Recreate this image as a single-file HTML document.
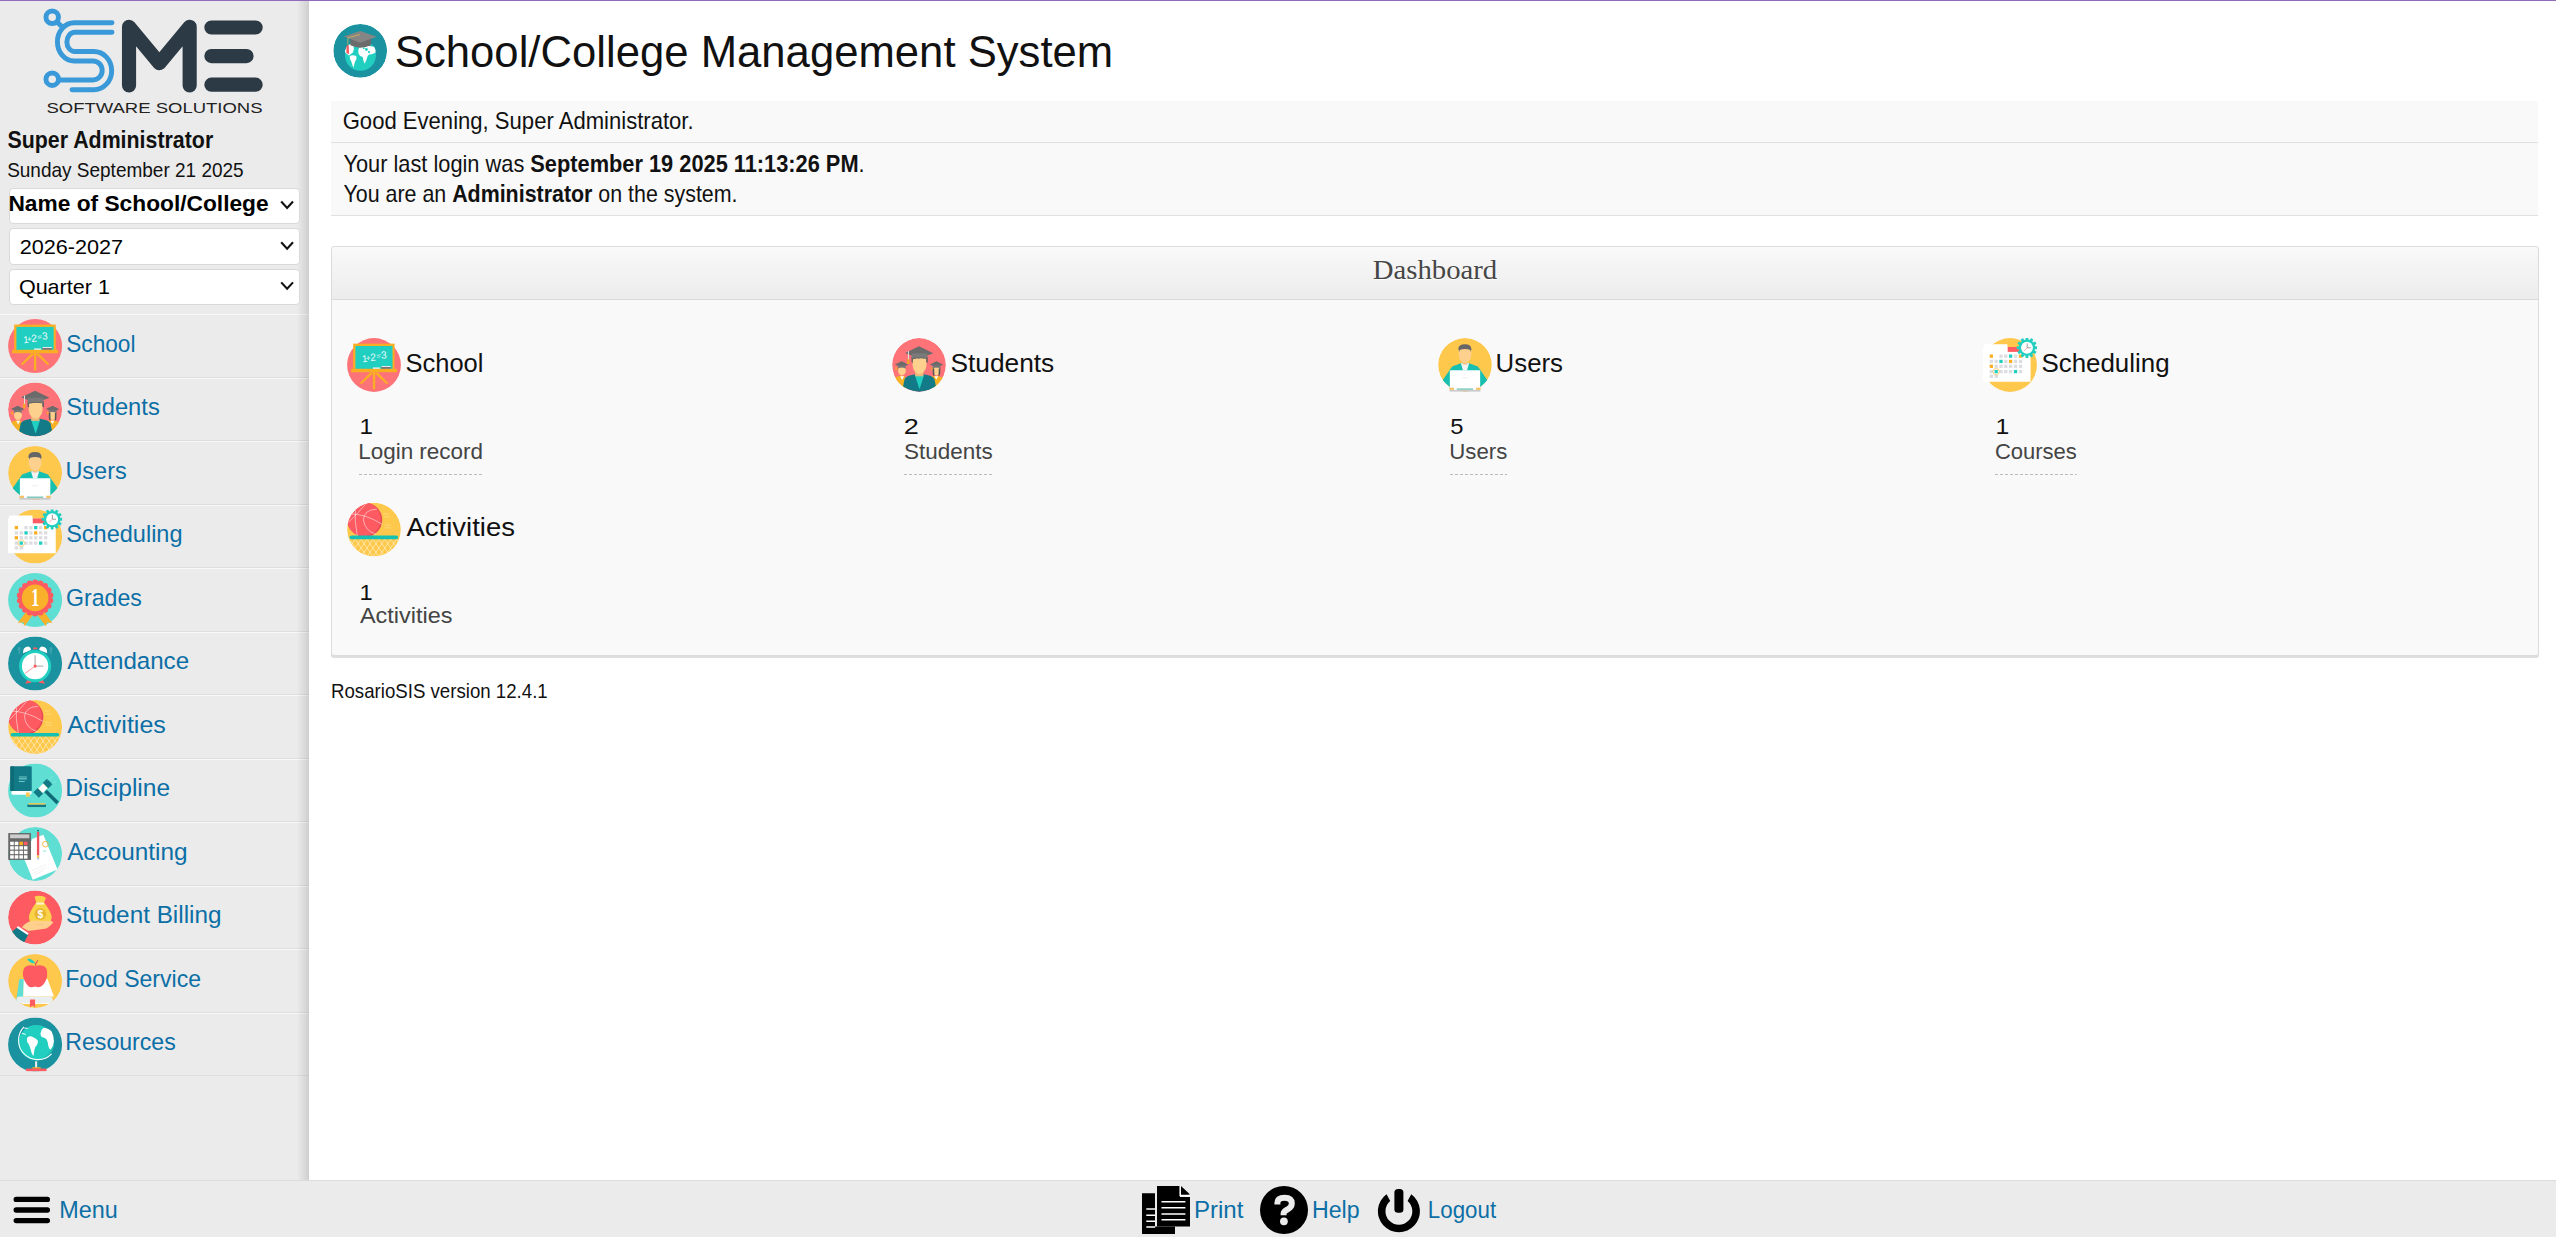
<!DOCTYPE html>
<html><head><meta charset="utf-8"><title>RosarioSIS</title>
<style>
html,body{margin:0;padding:0;}
body{width:2556px;height:1237px;overflow:hidden;position:relative;background:#fff;font-family:"Liberation Sans",sans-serif;}
div{position:absolute;box-sizing:border-box;}
#top{left:0;top:0;width:2556px;height:1px;background:#8f6cba;}
#side{left:0;top:1px;width:309px;height:1179px;background:#ebebeb;}
#sideshadow{left:297px;top:1px;width:12px;height:1179px;background:linear-gradient(to right,rgba(0,0,0,0),rgba(0,0,0,0.11) 92%,rgba(0,0,0,0.14));}
.sel{left:8.5px;width:291px;background:#fff;border:1px solid #d9d9d9;border-radius:4px;}
.mi{left:0;width:309px;height:63.5px;border-top:1px solid #f8f8f8;border-bottom:1px solid #dedede;}
#greet{left:331px;top:101px;width:2207px;height:115px;background:#f9f9f9;border-bottom:1px solid #e1e1e1;}
#greetsep{left:331px;top:142px;width:2207px;height:1px;background:#e1e1e1;}
#dash{left:331px;top:246px;width:2208px;height:410px;background:#f9f9f9;border:1px solid #dcdcdc;border-radius:3px;box-shadow:0 2px 0 #dedede;}
#dashhead{left:332px;top:247px;width:2206px;height:53px;background:linear-gradient(#f9f9f9,#ececec);border-bottom:1px solid #dadada;border-radius:3px 3px 0 0;}
#foot{left:0;top:1180px;width:2556px;height:57px;background:#ebebeb;border-top:1px solid #dcdcdc;}
svg#ov{position:absolute;left:0;top:0;width:2556px;height:1237px;}
</style></head><body>
<div id="top"></div>
<div id="side"></div>
<div class="mi" style="top:314.00px"></div><div class="mi" style="top:377.50px"></div><div class="mi" style="top:441.00px"></div><div class="mi" style="top:504.50px"></div><div class="mi" style="top:568.00px"></div><div class="mi" style="top:631.50px"></div><div class="mi" style="top:695.00px"></div><div class="mi" style="top:758.50px"></div><div class="mi" style="top:822.00px"></div><div class="mi" style="top:885.50px"></div><div class="mi" style="top:949.00px"></div><div class="mi" style="top:1012.50px"></div>
<div id="sideshadow"></div>
<div class="sel" style="top:187.5px;height:36px"></div>
<div class="sel" style="top:227.5px;height:37px"></div>
<div class="sel" style="top:268.5px;height:36px"></div>
<div id="greet"></div><div id="greetsep"></div>
<div id="dash"></div><div id="dashhead"></div>
<div id="foot"></div>
<svg id="ov" viewBox="0 0 2556 1237" width="2556" height="1237">
<defs>
<clipPath id="cl-st"><circle cx="600" cy="580" r="523"/></clipPath>
<clipPath id="cl-us"><circle cx="600" cy="580" r="523"/></clipPath>
<clipPath id="cl-ac"><circle cx="600" cy="580" r="523"/></clipPath>
<clipPath id="cl-acc"><circle cx="600" cy="580" r="523"/></clipPath>
<clipPath id="cl-bi"><circle cx="600" cy="580" r="523"/></clipPath>
<clipPath id="cl-fo"><circle cx="600" cy="580" r="523"/></clipPath>
<clipPath id="cl-ac2"><rect x="0" y="765" width="1200" height="400"/></clipPath>
<clipPath id="cl-ti"><circle cx="620" cy="637" r="520"/></clipPath>
<symbol id="ic-school" viewBox="75 55 1050 1050"><circle cx="600" cy="580" r="523" fill="#fe7378"/><rect x="195" y="165" width="805" height="490" fill="#f9ae23"/><rect x="238" y="210" width="722" height="445" fill="#21cfc1"/><g fill="#fff" fill-opacity="0.92" font-family="Liberation Sans" transform="rotate(-5 600 420)"><text x="365" y="505" font-size="190">1</text><text x="440" y="488" font-size="160">+</text><text x="525" y="495" font-size="200">2</text><text x="645" y="465" font-size="150">=</text><text x="735" y="470" font-size="200">3</text></g><rect x="580" y="628" width="135" height="27" fill="#f4f4f4"/><rect x="745" y="600" width="180" height="55" fill="#7d7377"/><rect x="745" y="600" width="180" height="18" fill="#f2f2f2"/><rect x="155" y="655" width="890" height="65" fill="#f9ae23"/><path d="M578 715 H624 V1050 H578 Z M535 715 L585 740 L360 950 L320 935 Z M665 715 L615 740 L840 950 L880 935 Z" fill="#f9ae23"/></symbol>
<symbol id="ic-students" viewBox="75 55 1050 1050"><g clip-path="url(#cl-st)"><circle cx="600" cy="580" r="523" fill="#fe7378"/><path d="M120 830 L230 790 L330 800 L360 1100 L120 1100 Z" fill="#f6b225"/><path d="M860 800 L950 790 L1080 830 L1080 1100 L860 1100 Z" fill="#f6b225"/><path d="M235 800 L270 870 L310 800 Z M900 800 L935 860 L975 800 Z" fill="#fff"/><ellipse cx="268" cy="690" rx="75" ry="95" fill="#fdd08d"/><ellipse cx="940" cy="690" rx="75" ry="95" fill="#fdd08d"/><path d="M865 640 Q860 760 880 790 L900 790 L895 650 Z M1015 640 Q1020 760 1000 790 L980 790 L985 650 Z" fill="#555"/><path d="M130 570 L265 505 L395 575 L265 630 Z" fill="#6b6b6b"/><path d="M190 590 H340 V650 Q265 610 190 650 Z" fill="#777"/><path d="M810 570 L940 505 L1070 575 L940 630 Z" fill="#6b6b6b"/><path d="M865 590 H1015 V650 Q940 610 865 650 Z" fill="#777"/><rect x="140" y="625" width="35" height="50" fill="#f6a623"/><rect x="830" y="625" width="30" height="45" fill="#f6a623"/><path d="M290 1000 L320 850 Q340 800 480 770 L540 760 H680 L740 770 Q880 800 900 850 L930 1000 Q600 1200 290 1000 Z" fill="#127b87"/><path d="M525 790 H695 L610 1050 Z" fill="#21cfc1"/><rect x="525" y="680" width="160" height="120" fill="#f0b97c"/><path d="M475 430 H745 V590 Q740 670 690 715 Q640 755 610 755 Q580 755 530 715 Q480 670 475 590 Z" fill="#fdd08d"/><path d="M455 420 H770 V540 L740 520 V460 Q600 430 480 470 V540 L455 520 Z" fill="#5d5d5d"/><path d="M330 345 L600 215 L880 350 L600 455 Z" fill="#6b6b6b"/><path d="M460 350 H760 V460 Q600 400 460 460 Z" fill="#7a7a7a"/><rect x="385" y="310" width="20" height="170" fill="#ddd"/><rect x="368" y="470" width="45" height="90" fill="#f6a623"/></g></symbol>
<symbol id="ic-users" viewBox="75 55 1050 1050"><g clip-path="url(#cl-us)"><circle cx="600" cy="580" r="523" fill="#fec84c"/><path d="M160 880 L350 610 L520 545 H680 L850 610 L1040 880 L900 1010 H300 Z" fill="#17bfb0"/><path d="M520 545 L560 680 H640 L680 545 Z" fill="#f3f3f3"/><rect x="560" y="500" width="80" height="70" fill="#f0b97c"/><path d="M478 270 H722 V400 Q722 470 660 520 Q620 550 600 550 Q580 550 540 520 Q478 470 478 400 Z" fill="#fdd08d"/><path d="M470 270 Q470 175 600 175 Q725 175 725 280 L705 330 V290 Q600 250 495 290 V330 Z" fill="#666"/></g><rect x="305" y="680" width="590" height="360" rx="15" fill="#fff"/><rect x="540" y="822" width="120" height="14" fill="#e3ecec"/><rect x="300" y="1062" width="600" height="35" fill="#c8cacc"/><rect x="295" y="1025" width="610" height="40" fill="#fff"/><rect x="440" y="1035" width="320" height="28" fill="#7fc6b8"/><rect x="295" y="1020" width="90" height="45" fill="#f3c26a"/><rect x="815" y="1020" width="90" height="45" fill="#f3c26a"/></symbol>
<symbol id="ic-sched" viewBox="75 55 1050 1050"><circle cx="600" cy="580" r="523" fill="#fec84c"/><path d="M75 905 V230 H95 V175 H550 V230 H1000 V905 Z" fill="#fff"/><rect x="555" y="230" width="235" height="95" fill="#fe5a61"/><rect x="205" y="376" width="64" height="64" fill="#f9ae23"/><rect x="393" y="376" width="64" height="64" fill="#dcdde0"/><rect x="486" y="376" width="64" height="64" fill="#dcdde0"/><rect x="580" y="376" width="64" height="64" fill="#21cfc1"/><rect x="676" y="376" width="64" height="64" fill="#dcdde0"/><rect x="773" y="376" width="64" height="64" fill="#f9ae23"/><rect x="205" y="478" width="64" height="64" fill="#dcdde0"/><rect x="300" y="478" width="64" height="64" fill="#dcdde0"/><rect x="393" y="478" width="64" height="64" fill="#21cfc1"/><rect x="486" y="478" width="64" height="64" fill="#dcdde0"/><rect x="580" y="478" width="64" height="64" fill="#f9ae23"/><rect x="676" y="478" width="64" height="64" fill="#dcdde0"/><rect x="773" y="478" width="64" height="64" fill="#dcdde0"/><rect x="205" y="573" width="64" height="64" fill="#f9ae23"/><rect x="300" y="573" width="64" height="64" fill="#dcdde0"/><rect x="393" y="573" width="64" height="64" fill="#dcdde0"/><rect x="486" y="573" width="64" height="64" fill="#dcdde0"/><rect x="580" y="573" width="64" height="64" fill="#dcdde0"/><rect x="676" y="573" width="64" height="64" fill="#dcdde0"/><rect x="773" y="573" width="64" height="64" fill="#dcdde0"/><rect x="205" y="676" width="64" height="64" fill="#dcdde0"/><rect x="300" y="676" width="64" height="64" fill="#21cfc1"/><rect x="393" y="676" width="64" height="64" fill="#dcdde0"/><rect x="486" y="676" width="64" height="64" fill="#dcdde0"/><rect x="580" y="676" width="64" height="64" fill="#dcdde0"/><rect x="676" y="676" width="64" height="64" fill="#21cfc1"/><rect x="773" y="676" width="64" height="64" fill="#dcdde0"/><rect x="205" y="768" width="64" height="64" fill="#dcdde0"/><rect x="300" y="768" width="64" height="64" fill="#dcdde0"/><circle cx="332" cy="708" r="62" fill="none" stroke="#f9ae23" stroke-width="10"/><circle cx="930" cy="245" r="160" fill="#21cfc1"/><rect x="902.5" y="45" width="55" height="60" rx="8" fill="#21cfc1" transform="rotate(0.0 930 245)"/><rect x="902.5" y="45" width="55" height="60" rx="8" fill="#21cfc1" transform="rotate(30.0 930 245)"/><rect x="902.5" y="45" width="55" height="60" rx="8" fill="#21cfc1" transform="rotate(60.0 930 245)"/><rect x="902.5" y="45" width="55" height="60" rx="8" fill="#21cfc1" transform="rotate(90.0 930 245)"/><rect x="902.5" y="45" width="55" height="60" rx="8" fill="#21cfc1" transform="rotate(120.0 930 245)"/><rect x="902.5" y="45" width="55" height="60" rx="8" fill="#21cfc1" transform="rotate(150.0 930 245)"/><rect x="902.5" y="45" width="55" height="60" rx="8" fill="#21cfc1" transform="rotate(180.0 930 245)"/><rect x="902.5" y="45" width="55" height="60" rx="8" fill="#21cfc1" transform="rotate(210.0 930 245)"/><rect x="902.5" y="45" width="55" height="60" rx="8" fill="#21cfc1" transform="rotate(240.0 930 245)"/><rect x="902.5" y="45" width="55" height="60" rx="8" fill="#21cfc1" transform="rotate(270.0 930 245)"/><rect x="902.5" y="45" width="55" height="60" rx="8" fill="#21cfc1" transform="rotate(300.0 930 245)"/><rect x="902.5" y="45" width="55" height="60" rx="8" fill="#21cfc1" transform="rotate(330.0 930 245)"/><circle cx="930" cy="245" r="115" fill="#fff"/><path d="M935 245 V160 M935 245 H1005" stroke="#777" stroke-width="14"/><path d="M935 245 L875 305" stroke="#fe5a61" stroke-width="10"/></symbol>
<symbol id="ic-grades" viewBox="75 55 1050 1050"><circle cx="600" cy="580" r="523" fill="#5fded4"/><path d="M440 790 L555 870 L395 1090 L375 1010 L265 1025 Z M760 790 L645 870 L810 1090 L830 1010 L935 1025 Z" fill="#f9b02a"/><circle cx="600" cy="540" r="300" fill="#fe5a61"/><circle cx="600.0" cy="240.0" r="58" fill="#fe5a61"/><circle cx="702.6" cy="258.1" r="58" fill="#fe5a61"/><circle cx="792.8" cy="310.2" r="58" fill="#fe5a61"/><circle cx="859.8" cy="390.0" r="58" fill="#fe5a61"/><circle cx="895.4" cy="487.9" r="58" fill="#fe5a61"/><circle cx="895.4" cy="592.1" r="58" fill="#fe5a61"/><circle cx="859.8" cy="690.0" r="58" fill="#fe5a61"/><circle cx="792.8" cy="769.8" r="58" fill="#fe5a61"/><circle cx="702.6" cy="821.9" r="58" fill="#fe5a61"/><circle cx="600.0" cy="840.0" r="58" fill="#fe5a61"/><circle cx="497.4" cy="821.9" r="58" fill="#fe5a61"/><circle cx="407.2" cy="769.8" r="58" fill="#fe5a61"/><circle cx="340.2" cy="690.0" r="58" fill="#fe5a61"/><circle cx="304.6" cy="592.1" r="58" fill="#fe5a61"/><circle cx="304.6" cy="487.9" r="58" fill="#fe5a61"/><circle cx="340.2" cy="390.0" r="58" fill="#fe5a61"/><circle cx="407.2" cy="310.2" r="58" fill="#fe5a61"/><circle cx="497.4" cy="258.1" r="58" fill="#fe5a61"/><circle cx="600" cy="540" r="258" fill="#f9b02a"/><text transform="translate(600 700) scale(0.78 1.12)" text-anchor="middle" font-family="Liberation Serif" font-weight="bold" font-size="420" fill="#fff">1</text></symbol>
<symbol id="ic-att" viewBox="75 55 1050 1050"><circle cx="600" cy="580" r="523" fill="#1a92a0"/><path d="M365 380 Q360 250 470 250 Q520 260 520 320 Z" fill="#fff"/><path d="M835 380 Q840 250 730 250 Q680 260 680 320 Z" fill="#fff"/><rect x="560" y="268" width="80" height="35" rx="12" fill="#fe5a61"/><path d="M410 972 L452 888 L548 918 L520 955 Z M790 972 L748 888 L652 918 L680 955 Z" fill="#fe5a61"/><path d="M290 260 Q250 300 290 340 Q320 370 280 400 M315 270 Q290 300 315 330 M910 260 Q950 300 910 340 Q880 370 920 400 M885 270 Q910 300 885 330" stroke="#7fc3cb" stroke-width="10" fill="none"/><circle cx="600" cy="630" r="312" fill="#21cfc1"/><circle cx="600" cy="630" r="255" fill="#fff"/><path d="M600 630 V420 M600 630 H760" stroke="#b9b9b9" stroke-width="26"/><path d="M600 630 L410 770" stroke="#fe5a61" stroke-width="12"/><circle cx="600" cy="630" r="30" fill="#fe5a61"/></symbol>
<symbol id="ic-act" viewBox="75 55 1050 1050"><g clip-path="url(#cl-ac)"><circle cx="600" cy="580" r="523" fill="#fec84c"/><circle cx="425" cy="390" r="335" fill="#e94a56"/><circle cx="400" cy="375" r="330" fill="#fe5a61"/><path d="M105 275 Q420 260 760 475 M240 115 Q215 420 275 700 M440 80 Q290 260 90 450 M655 180 Q400 190 395 390 Q420 600 640 670" stroke="#fff" stroke-width="11" fill="none" stroke-opacity="0.9"/><path d="M780 270 H880 M790 330 H910 M800 490 H920 M810 545 H930" stroke="#ffe08a" stroke-width="14"/><path d="M-340 765 L-113 1100 M-340 765 L-567 1100 M-225 765 L2 1100 M-225 765 L-452 1100 M-110 765 L117 1100 M-110 765 L-337 1100 M5 765 L232 1100 M5 765 L-222 1100 M120 765 L347 1100 M120 765 L-107 1100 M235 765 L462 1100 M235 765 L8 1100 M350 765 L577 1100 M350 765 L123 1100 M465 765 L692 1100 M465 765 L238 1100 M580 765 L807 1100 M580 765 L353 1100 M695 765 L922 1100 M695 765 L468 1100 M810 765 L1037 1100 M810 765 L583 1100 M925 765 L1152 1100 M925 765 L698 1100 M1040 765 L1267 1100 M1040 765 L813 1100 M1155 765 L1382 1100 M1155 765 L928 1100 M1270 765 L1497 1100 M1270 765 L1043 1100 M1385 765 L1612 1100 M1385 765 L1158 1100 " stroke="#fff5d5" stroke-width="12" clip-path="url(#cl-ac2)"/></g><rect x="125" y="695" width="945" height="70" rx="35" fill="#14c1b2"/></symbol>
<symbol id="ic-disc" viewBox="75 55 1050 1050"><circle cx="600" cy="580" r="523" fill="#5fded4"/><rect x="140" y="585" width="395" height="75" rx="37" fill="#fff"/><rect x="120" y="110" width="415" height="480" rx="25" fill="#117a86"/><rect x="120" y="110" width="70" height="480" rx="20" fill="#0e6c77"/><path d="M285 320 H440 M285 355 H440 M285 405 H400" stroke="#6fc9cc" stroke-width="20"/><path d="M425 620 H495 V715 L460 690 L425 715 Z" fill="#fec84c"/><g transform="rotate(45 752 537)"><rect x="825" y="502" width="330" height="70" fill="#0f6b77"/><rect x="677" y="350" width="150" height="120" fill="#117a86"/><rect x="677" y="604" width="150" height="120" fill="#117a86"/><rect x="692" y="468" width="120" height="138" fill="#fff"/><path d="M692 470 H812 M692 604 H812" stroke="#e0b84e" stroke-width="6"/></g><path d="M840 380 L950 300 M915 455 L1020 390" stroke="#9ceae2" stroke-width="12" stroke-dasharray="20 10"/><rect x="450" y="850" width="360" height="50" fill="#117a86"/><rect x="470" y="825" width="325" height="27" fill="#fec84c"/></symbol>
<symbol id="ic-acc" viewBox="75 55 1050 1050"><g clip-path="url(#cl-acc)"><circle cx="600" cy="580" r="523" fill="#5fded4"/><path d="M540 290 L760 205 L1035 880 L555 1080 L400 700 Z" fill="#fff"/></g><path d="M540 900 L800 790 M560 950 L820 840 M575 990 L760 905" stroke="#e6e6e6" stroke-width="10"/><circle cx="800" cy="390" r="55" fill="none" stroke="#f9ae23" stroke-width="16"/><rect x="755" y="510" width="60" height="25" fill="#a6e6e0"/><rect x="635" y="150" width="45" height="460" fill="#f0515e"/><rect x="635" y="610" width="45" height="45" fill="#fec84c"/><path d="M635 655 H680 L658 700 Z" fill="#9ad"/><rect x="640" y="115" width="35" height="25" fill="#0e6c77"/><rect x="80" y="175" width="440" height="520" fill="#666"/><rect x="115" y="200" width="375" height="75" fill="#cdcdcd"/><rect x="117" y="342" width="70" height="66" fill="#fff"/><rect x="205" y="342" width="70" height="66" fill="#fff"/><rect x="295" y="342" width="70" height="66" fill="#f9ae23"/><rect x="383" y="342" width="70" height="66" fill="#fe5a61"/><rect x="117" y="429" width="70" height="66" fill="#fff"/><rect x="205" y="429" width="70" height="66" fill="#fff"/><rect x="295" y="429" width="70" height="66" fill="#fff"/><rect x="383" y="429" width="70" height="66" fill="#fff"/><rect x="117" y="517" width="70" height="66" fill="#fff"/><rect x="205" y="517" width="70" height="66" fill="#fff"/><rect x="295" y="517" width="70" height="66" fill="#fff"/><rect x="383" y="517" width="70" height="66" fill="#fff"/><rect x="117" y="604" width="70" height="66" fill="#fff"/><rect x="205" y="604" width="70" height="66" fill="#fff"/><rect x="295" y="604" width="70" height="66" fill="#fff"/><rect x="383" y="604" width="70" height="66" fill="#fff"/></symbol>
<symbol id="ic-bill" viewBox="75 55 1050 1050"><g clip-path="url(#cl-bi)"><circle cx="600" cy="580" r="523" fill="#fe5a61"/><path d="M150 855 L260 770 L470 905 L390 1060 L200 1000 Z" fill="#117a86"/><path d="M255 760 L465 900" stroke="#fff" stroke-width="40"/></g><path d="M620 290 Q480 480 480 580 Q480 720 700 720 Q920 720 920 580 Q920 480 775 290 Z" fill="#f9d24a"/><path d="M590 180 Q640 150 700 165 Q760 150 810 200 L770 295 H625 Z" fill="#f9d24a"/><rect x="625" y="290" width="145" height="40" fill="#fff7cf"/><circle cx="700" cy="515" r="112" fill="#e9b52e"/><text x="700" y="590" text-anchor="middle" font-family="Liberation Sans" font-weight="bold" font-size="200" fill="#fff">$</text><path d="M345 770 Q420 680 520 650 Q620 630 720 650 L900 650 Q960 660 940 690 Q860 780 790 800 L470 840 Z" fill="#fdd08d"/><path d="M610 720 H760" stroke="#f4c27b" stroke-width="14"/></symbol>
<symbol id="ic-food" viewBox="75 55 1050 1050"><g clip-path="url(#cl-fo)"><circle cx="600" cy="580" r="523" fill="#fec84c"/><path d="M290 560 Q290 540 330 540 H385 L370 890 L230 1000 Z" fill="#5fded4"/><path d="M380 540 H840 L965 880 H370 Z" fill="#fff"/><rect x="240" y="880" width="700" height="130" rx="60" fill="#e9eef0"/><path d="M240 945 Q240 1010 330 1015 H975" stroke="#5fded4" stroke-width="0" fill="none"/><rect x="340" y="1005" width="640" height="18" fill="#fff"/><path d="M500 940 H600 V1095 L550 1055 L500 1095 Z" fill="#fe5a61"/></g><path d="M600 300 Q520 260 440 290 Q350 330 365 470 Q380 580 460 670 Q510 720 560 695 Q600 680 640 695 Q700 720 760 650 Q830 560 835 450 Q840 320 760 290 Q680 260 600 300 Z" fill="#fe5a61"/><path d="M600 300 Q610 220 655 180" stroke="#e0505a" stroke-width="22" fill="none"/><path d="M445 150 Q540 130 605 235 Q500 250 445 150 Z" fill="#21cfc1"/></symbol>
<symbol id="ic-res" viewBox="75 55 1050 1050"><circle cx="600" cy="580" r="523" fill="#1a92a0"/><circle cx="625" cy="545" r="343" fill="#21cfc1"/><path d="M700 880 A343 343 0 0 0 960 480 Q930 760 700 880 Z" fill="#1fbfb4"/><path d="M440 470 Q450 415 520 420 Q600 450 650 500 Q665 540 640 585 Q600 620 590 670 Q575 740 570 805 Q530 760 520 700 Q505 640 480 580 Q430 530 440 470 Z" fill="#fff"/><path d="M760 260 Q850 250 920 330 Q965 420 965 520 Q955 620 900 680 Q860 660 855 600 Q850 530 820 480 Q780 440 740 440 Q700 420 705 360 Q715 290 760 260 Z" fill="#fff"/><path d="M345 365 L420 385 M390 260 L460 270" stroke="#fff" stroke-width="18"/><path d="M385 240 A365 365 0 0 0 920 760" stroke="#fff" stroke-width="20" fill="none"/><rect x="600" y="905" width="40" height="130" fill="#eee"/><rect x="545" y="1022" width="165" height="30" rx="10" fill="#f9ae23"/><rect x="420" y="1045" width="405" height="55" rx="27" fill="#fe5a61"/></symbol>
<symbol id="ic-title" viewBox="100 115 1040 1045"><g clip-path="url(#cl-ti)"><circle cx="620" cy="637" r="520" fill="#1a92a0"/><circle cx="625" cy="720" r="300" fill="#21cfc1"/><path d="M325 660 Q335 560 420 510 L490 515 Q510 600 480 670 Q440 700 405 725 Q355 705 325 660 Z" fill="#fff"/><path d="M585 610 Q610 540 720 535 L890 555 Q930 620 915 670 Q870 700 825 705 Q785 700 765 735 Q745 810 705 885 Q675 820 668 755 Q600 735 585 690 Z" fill="#fff"/><path d="M418 738 Q470 705 545 738 Q562 790 522 842 Q502 900 492 962 Q460 900 448 842 Q408 790 418 738 Z" fill="#fff"/><circle cx="740" cy="610" r="28" fill="#21cfc1"/><circle cx="790" cy="660" r="22" fill="#21cfc1"/><circle cx="690" cy="585" r="18" fill="#21cfc1"/></g><path d="M430 390 H830 V530 Q620 620 430 530 Z" fill="#6b6b6b"/><path d="M300 360 L620 250 L940 365 L620 480 Z" fill="#858585"/><path d="M612 322 L380 385 V520" stroke="#e0b84e" stroke-width="14" fill="none"/><path d="M355 540 L398 528 L405 700 L352 680 Z" fill="#fe5a61"/></symbol>
</defs>
<g transform="translate(40 5) scale(0.072727)">
<g fill="none" stroke="#3a9ad9" stroke-width="68" stroke-linecap="round">
<circle cx="168" cy="168" r="86"/>
<circle cx="168" cy="1020" r="86"/>
<path d="M235 235 L300 295"/>
<path d="M990 245 H470 A230 262 0 0 0 470 770 H730 A125 130 0 0 1 730 1030 H265"/>
<path d="M990 375 H480 A110 132 0 0 0 480 640 H740 A245 262 0 0 1 740 1165 H440"/>
</g></g>
<g transform="translate(30 0) scale(0.10105)" fill="none" stroke="#2b3a44" stroke-width="140" stroke-linecap="round" stroke-linejoin="round">
<path d="M980 845 V265 L1280 625 L1580 265 V845"/>
<path d="M1795 272 H2233 M1795 555 H2143 M1795 838 H2233"/>
</g>
<text x="46.5" y="113.2" font-family="Liberation Sans" font-size="14.6" fill="#222" textLength="216" lengthAdjust="spacingAndGlyphs">SOFTWARE SOLUTIONS</text>

<path d="M281.2 201.5 L287.1 207.9 L293 201.5" fill="none" stroke="#111" stroke-width="2.1"/><path d="M281.2 242.29999999999998 L287.1 248.7 L293 242.29999999999998" fill="none" stroke="#111" stroke-width="2.1"/><path d="M281.2 282.4 L287.1 288.8 L293 282.4" fill="none" stroke="#111" stroke-width="2.1"/>
<use href="#ic-title" x="333.2" y="23.9" width="54" height="54"/><use href="#ic-school" x="8" y="318.90" width="54.2" height="54.2"/><use href="#ic-students" x="8" y="382.40" width="54.2" height="54.2"/><use href="#ic-users" x="8" y="445.90" width="54.2" height="54.2"/><use href="#ic-sched" x="8" y="509.40" width="54.2" height="54.2"/><use href="#ic-grades" x="8" y="572.90" width="54.2" height="54.2"/><use href="#ic-att" x="8" y="636.40" width="54.2" height="54.2"/><use href="#ic-act" x="8" y="699.90" width="54.2" height="54.2"/><use href="#ic-disc" x="8" y="763.40" width="54.2" height="54.2"/><use href="#ic-acc" x="8" y="826.90" width="54.2" height="54.2"/><use href="#ic-bill" x="8" y="890.40" width="54.2" height="54.2"/><use href="#ic-food" x="8" y="953.90" width="54.2" height="54.2"/><use href="#ic-res" x="8" y="1017.40" width="54.2" height="54.2"/><use href="#ic-school" x="347" y="338" width="54" height="54"/><use href="#ic-students" x="892" y="338" width="54" height="54"/><use href="#ic-users" x="1438" y="338" width="54" height="54"/><use href="#ic-sched" x="1983" y="338" width="54" height="54"/><use href="#ic-act" x="347" y="502.7" width="54" height="54"/>
<path d="M359.0 474.5 H482.3" stroke="#bbb" stroke-width="1" stroke-dasharray="3 2"/><path d="M904.0 474.5 H992.5" stroke="#bbb" stroke-width="1" stroke-dasharray="3 2"/><path d="M1450.0 474.5 H1507.1" stroke="#bbb" stroke-width="1" stroke-dasharray="3 2"/><path d="M1995.0 474.5 H2076.7" stroke="#bbb" stroke-width="1" stroke-dasharray="3 2"/>

<g fill="#000">
<path d="M1142 1193.3 H1155 V1226.5 H1175 V1234 H1142 Z"/>
<path d="M1157 1186 H1180 V1197 H1190 V1226.4 H1157 Z"/>
<path d="M1181 1186 L1190 1194.5 H1181 Z"/>
</g>
<g stroke="#fff" stroke-width="1.5">
<path d="M1161.5 1201.7 H1185.4 M1161.5 1207.8 H1185.4 M1161.5 1213.9 H1185.4 M1161.5 1219.8 H1185.4"/>
<path d="M1146.3 1209.1 H1155.2 M1146.3 1215.2 H1155.2 M1146.3 1221.3 H1155.2 M1146.3 1227.1 H1155.2"/>
<path d="M1180.2 1186 V1195.6 H1190"/>
</g>
<circle cx="1284" cy="1210" r="24" fill="#000"/>
<path d="M1277.4 1204.5 V1202.8 Q1277.6 1197.8 1284.5 1197.8 Q1291.8 1197.8 1291.8 1203.5 Q1291.8 1207 1288 1209.2 Q1283.6 1211.5 1283.6 1213.5 V1215.2" fill="none" stroke="#ebebeb" stroke-width="6"/>
<circle cx="1283.9" cy="1221.3" r="3.9" fill="#ebebeb"/>
<path d="M1386.56 1194.31 A21 21 0 1 0 1411.24 1194.31 L1407.6 1201.11 A13.4 13.4 0 1 1 1390.2 1201.11 Z" fill="#000"/>
<rect x="1394.4" y="1189" width="9" height="23.8" rx="3.6" fill="#000"/>
<path d="M16.2 1199.4 H47.4 M16.2 1210 H47.4 M16.2 1220.6 H47.4" stroke="#000" stroke-width="5.3" stroke-linecap="round"/>

<text transform="translate(7.46 147.90) scale(0.9212 1)" font-size="23.2" fill="#111" ><tspan font-weight="bold" font-family="Liberation Sans">Super Administrator</tspan></text><text transform="translate(7.14 176.60) scale(0.9314 1)" font-size="20.4" fill="#111" ><tspan font-weight="normal" font-family="Liberation Sans">Sunday September 21 2025</tspan></text><text transform="translate(8.46 210.50) scale(1.0107 1)" font-size="22.5" fill="#000" ><tspan font-weight="bold" font-family="Liberation Sans">Name of School/College</tspan></text><text transform="translate(19.69 254.20) scale(1.0304 1)" font-size="21" fill="#000" ><tspan font-weight="normal" font-family="Liberation Sans">2026-2027</tspan></text><text transform="translate(18.88 293.70) scale(1.0518 1)" font-size="20.5" fill="#000" ><tspan font-weight="normal" font-family="Liberation Sans">Quarter 1</tspan></text><text transform="translate(66.18 351.90) scale(0.9571 1)" font-size="23.7" fill="#0c6fa6" ><tspan font-weight="normal" font-family="Liberation Sans">School</tspan></text><text transform="translate(66.13 415.40) scale(1.0015 1)" font-size="23.7" fill="#0c6fa6" ><tspan font-weight="normal" font-family="Liberation Sans">Students</tspan></text><text transform="translate(65.38 478.90) scale(0.9924 1)" font-size="23.7" fill="#0c6fa6" ><tspan font-weight="normal" font-family="Liberation Sans">Users</tspan></text><text transform="translate(66.14 542.40) scale(0.9926 1)" font-size="23.7" fill="#0c6fa6" ><tspan font-weight="normal" font-family="Liberation Sans">Scheduling</tspan></text><text transform="translate(66.05 605.90) scale(0.9746 1)" font-size="23.7" fill="#0c6fa6" ><tspan font-weight="normal" font-family="Liberation Sans">Grades</tspan></text><text transform="translate(67.14 669.40) scale(1.0169 1)" font-size="23.7" fill="#0c6fa6" ><tspan font-weight="normal" font-family="Liberation Sans">Attendance</tspan></text><text transform="translate(67.14 732.90) scale(1.0561 1)" font-size="23.7" fill="#0c6fa6" ><tspan font-weight="normal" font-family="Liberation Sans">Activities</tspan></text><text transform="translate(65.18 796.40) scale(1.0344 1)" font-size="23.7" fill="#0c6fa6" ><tspan font-weight="normal" font-family="Liberation Sans">Discipline</tspan></text><text transform="translate(67.14 859.90) scale(1.0272 1)" font-size="23.7" fill="#0c6fa6" ><tspan font-weight="normal" font-family="Liberation Sans">Accounting</tspan></text><text transform="translate(66.11 923.40) scale(1.0262 1)" font-size="23.7" fill="#0c6fa6" ><tspan font-weight="normal" font-family="Liberation Sans">Student Billing</tspan></text><text transform="translate(65.30 986.90) scale(0.9720 1)" font-size="23.7" fill="#0c6fa6" ><tspan font-weight="normal" font-family="Liberation Sans">Food Service</tspan></text><text transform="translate(65.29 1050.40) scale(0.9756 1)" font-size="23.7" fill="#0c6fa6" ><tspan font-weight="normal" font-family="Liberation Sans">Resources</tspan></text><text transform="translate(394.83 66.70) scale(0.9814 1)" font-size="44.5" fill="#111" ><tspan font-weight="normal" font-family="Liberation Sans">School/College Management System</tspan></text><text transform="translate(342.70 129.00) scale(0.9358 1)" font-size="23.6" fill="#111" ><tspan font-weight="normal" font-family="Liberation Sans">Good Evening, Super Administrator.</tspan></text><text transform="translate(343.42 171.50) scale(0.9238 1)" font-size="23.6" fill="#111" ><tspan font-weight="normal" font-family="Liberation Sans">Your last login was </tspan><tspan font-weight="bold" font-family="Liberation Sans">September 19 2025 11:13:26 PM</tspan><tspan font-weight="normal" font-family="Liberation Sans">.</tspan></text><text transform="translate(343.47 201.50) scale(0.9072 1)" font-size="23.6" fill="#111" ><tspan font-weight="normal" font-family="Liberation Sans">You are an </tspan><tspan font-weight="bold" font-family="Liberation Sans">Administrator</tspan><tspan font-weight="normal" font-family="Liberation Sans"> on the system.</tspan></text><text transform="translate(1372.81 278.70) scale(1.0150 1)" font-size="28.3" fill="#464646" style="text-shadow:0 1px 0 #fff"><tspan font-weight="normal" font-family="Liberation Serif">Dashboard</tspan></text><text transform="translate(405.45 371.70) scale(0.9923 1)" font-size="25.7" fill="#111" ><tspan font-weight="normal" font-family="Liberation Sans">School</tspan></text><text transform="translate(359.50 433.50) scale(1.0640 1)" font-size="22.6" fill="#111" ><tspan font-weight="normal" font-family="Liberation Sans">1</tspan></text><text transform="translate(358.14 458.70) scale(0.9949 1)" font-size="22.6" fill="#444" ><tspan font-weight="normal" font-family="Liberation Sans">Login record</tspan></text><text transform="translate(950.42 371.70) scale(1.0242 1)" font-size="25.7" fill="#111" ><tspan font-weight="normal" font-family="Liberation Sans">Students</tspan></text><text transform="translate(903.85 433.50) scale(1.1961 1)" font-size="22.6" fill="#111" ><tspan font-weight="normal" font-family="Liberation Sans">2</tspan></text><text transform="translate(903.99 458.70) scale(0.9942 1)" font-size="22.6" fill="#444" ><tspan font-weight="normal" font-family="Liberation Sans">Students</tspan></text><text transform="translate(1495.60 371.70) scale(1.0039 1)" font-size="25.7" fill="#111" ><tspan font-weight="normal" font-family="Liberation Sans">Users</tspan></text><text transform="translate(1450.25 433.50) scale(1.0526 1)" font-size="22.6" fill="#111" ><tspan font-weight="normal" font-family="Liberation Sans">5</tspan></text><text transform="translate(1449.28 458.70) scale(0.9823 1)" font-size="22.6" fill="#444" ><tspan font-weight="normal" font-family="Liberation Sans">Users</tspan></text><text transform="translate(2041.43 371.70) scale(1.0079 1)" font-size="25.7" fill="#111" ><tspan font-weight="normal" font-family="Liberation Sans">Scheduling</tspan></text><text transform="translate(1995.44 433.50) scale(1.0947 1)" font-size="22.6" fill="#111" ><tspan font-weight="normal" font-family="Liberation Sans">1</tspan></text><text transform="translate(1994.90 458.70) scale(0.9744 1)" font-size="22.6" fill="#444" ><tspan font-weight="normal" font-family="Liberation Sans">Courses</tspan></text><text transform="translate(406.53 536.40) scale(1.0695 1)" font-size="25.7" fill="#111" ><tspan font-weight="normal" font-family="Liberation Sans">Activities</tspan></text><text transform="translate(359.53 599.52) scale(1.0435 1)" font-size="22.6" fill="#111" ><tspan font-weight="normal" font-family="Liberation Sans">1</tspan></text><text transform="translate(359.94 623.40) scale(1.0373 1)" font-size="22.6" fill="#444" ><tspan font-weight="normal" font-family="Liberation Sans">Activities</tspan></text><text transform="translate(330.96 698.00) scale(0.8977 1)" font-size="20.8" fill="#111" ><tspan font-weight="normal" font-family="Liberation Sans">RosarioSIS version 12.4.1</tspan></text><text transform="translate(59.27 1218.00) scale(1.0034 1)" font-size="23.3" fill="#0c6fa6" ><tspan font-weight="normal" font-family="Liberation Sans">Menu</tspan></text><text transform="translate(1193.91 1217.70) scale(1.0331 1)" font-size="23.3" fill="#0c6fa6" ><tspan font-weight="normal" font-family="Liberation Sans">Print</tspan></text><text transform="translate(1311.89 1217.70) scale(0.9950 1)" font-size="23.3" fill="#0c6fa6" ><tspan font-weight="normal" font-family="Liberation Sans">Help</tspan></text><text transform="translate(1427.86 1217.70) scale(0.9589 1)" font-size="23.3" fill="#0c6fa6" ><tspan font-weight="normal" font-family="Liberation Sans">Logout</tspan></text>
</svg>
</body></html>
